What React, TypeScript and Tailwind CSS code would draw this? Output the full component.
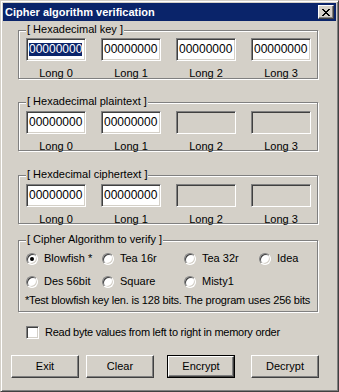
import React from 'react';

const font = { fontFamily: '"Liberation Sans", Arial, sans-serif' };

const sunken =
  'border border-t-[#808080] border-l-[#808080] border-r-white border-b-white shadow-[inset_1px_1px_0_#404040,inset_-1px_-1px_0_#d4d0c8]';
const raised =
  'border border-t-white border-l-white border-r-[#404040] border-b-[#404040] shadow-[inset_-1px_-1px_0_#808080]';

type EditProps = { value?: string; disabled?: boolean; selected?: boolean };

// sunken text field, Win2000 style
const Edit: React.FC<EditProps> = ({ value, disabled, selected }) => (
  <div
    className={`${sunken} w-[60px] h-[23px] overflow-hidden flex items-center pl-[2px] whitespace-nowrap text-[12px] leading-[13px] ${
      disabled ? 'bg-[#d4d0c8]' : 'bg-white'
    }`}
  >
    {selected ? <span className="bg-[#0a246a] text-white">{value}</span> : value}
  </div>
);

type GroupProps = { title: string; className?: string; children: React.ReactNode };

// etched group box with caption sitting on the top edge
const Group: React.FC<GroupProps> = ({ title, className, children }) => (
  <div className={`relative ml-[15px] w-[300px] border border-[#808080] shadow-[inset_1px_1px_0_#fff,1px_1px_0_#fff] ${className ?? ''}`}>
    <div className="absolute left-[7px] -top-[8px] px-[1px] bg-[#d4d0c8] leading-[13px] text-[11px] whitespace-nowrap">
      {title}
    </div>
    {children}
  </div>
);

type LongRowProps = { disabledFrom?: number; selectFirst?: boolean };

const LongRow: React.FC<LongRowProps> = ({ disabledFrom = 4, selectFirst }) => (
  <div className="flex gap-[15px] pl-[7px]">
    {[0, 1, 2, 3].map((i) => {
      const disabled = i >= disabledFrom;
      return (
        <div key={i} className="flex flex-col items-center w-[60px]">
          <Edit value={disabled ? undefined : '00000000'} disabled={disabled} selected={selectFirst && i === 0} />
          <div className="mt-[6px] text-[11px] leading-[13px]">Long {i}</div>
        </div>
      );
    })}
  </div>
);

const Radio: React.FC<{ label: string; checked?: boolean }> = ({ label, checked }) => (
  <div className="flex items-center h-[13px] whitespace-nowrap">
    <div className={`${sunken} w-[12px] h-[12px] rounded-full bg-white flex items-center justify-center`}>
      {checked && <div className="w-[4px] h-[4px] rounded-full bg-black" />}
    </div>
    <span className="ml-[6px] text-[11px] leading-[13px]">{label}</span>
  </div>
);

const Button: React.FC<{ label: string; isDefault?: boolean; className?: string }> = ({ label, isDefault, className }) =>
  isDefault ? (
    <div className={`border border-black w-[68px] h-[23px] ${className ?? ''}`}>
      <div className={`${raised} w-full h-full flex items-center justify-center text-[11px]`}>{label}</div>
    </div>
  ) : (
    <div className={`${raised} w-[68px] h-[23px] flex items-center justify-center text-[11px] ${className ?? ''}`}>{label}</div>
  );

export default function App() {
  return (
    <div
      className="w-[339px] h-[392px] bg-[#d4d0c8] text-black border border-t-[#d4d0c8] border-l-[#d4d0c8] border-r-[#404040] border-b-[#404040] shadow-[inset_1px_1px_0_#fff,inset_-1px_-1px_0_#808080] p-[2px] flex flex-col"
      style={font}
    >
      {/* title bar */}
      <div className="h-[18px] bg-[#0a246a] flex items-center justify-between">
        <span className="pl-[2px] text-white font-bold text-[11px] leading-[14px]">Cipher algorithm verification</span>
        <div className={`${raised} mr-[2px] w-[16px] h-[14px] bg-[#d4d0c8] flex items-center justify-center`}>
          <svg width="8" height="7" viewBox="0 0 8 7" shapeRendering="crispEdges">
            <path d="M0 0h2v1h-2zM6 0h2v1h-2zM1 1h2v1h-2zM5 1h2v1h-2zM2 2h4v1h-4zM3 3h2v1h-2zM2 4h4v1h-4zM1 5h2v1h-2zM5 5h2v1h-2zM0 6h2v1h-2zM6 6h2v1h-2z" fill="#000" />
          </svg>
        </div>
      </div>

      <Group title="[ Hexadecimal key ]" className="mt-[9px] h-[49px] pt-[7px]">
        <LongRow selectFirst />
      </Group>

      <Group title="[ Hexadecimal plaintext ]" className="mt-[23px] h-[49px] pt-[8px]">
        <LongRow disabledFrom={2} />
      </Group>

      <Group title="[ Hexdecimal ciphertext ]" className="mt-[24px] h-[49px] pt-[8px]">
        <LongRow disabledFrom={2} />
      </Group>

      <Group title="[ Cipher Algorithm to verify ]" className="mt-[16px] h-[72px] pt-[11px] pl-[7px]">
        <div className="grid grid-cols-[76px_82px_75px_auto] gap-y-[10px]">
          <Radio label="Blowfish *" checked />
          <Radio label="Tea 16r" />
          <Radio label="Tea 32r" />
          <Radio label="Idea" />
          <Radio label="Des 56bit" />
          <Radio label="Square" />
          <Radio label="Misty1" />
        </div>
        <div className="mt-[6px] text-[11px] leading-[13px] tracking-[-0.2px] whitespace-nowrap -ml-[1px]">
          *Test blowfish key len. is 128 bits. The program uses 256 bits
        </div>
      </Group>

      <div className="mt-[14px] ml-[23px] flex items-center">
        <div className={`${sunken} w-[13px] h-[13px] bg-white`} />
        <span className="ml-[6px] text-[11px] leading-[13px] tracking-[-0.25px]">Read byte values from left to right in memory order</span>
      </div>

      <div className="mt-[16px] ml-[8px] flex">
        <Button label="Exit" />
        <Button label="Clear" className="ml-[7px]" />
        <Button label="Encrypt" isDefault className="ml-[13px]" />
        <Button label="Decrypt" className="ml-[16px]" />
      </div>
    </div>
  );
}
